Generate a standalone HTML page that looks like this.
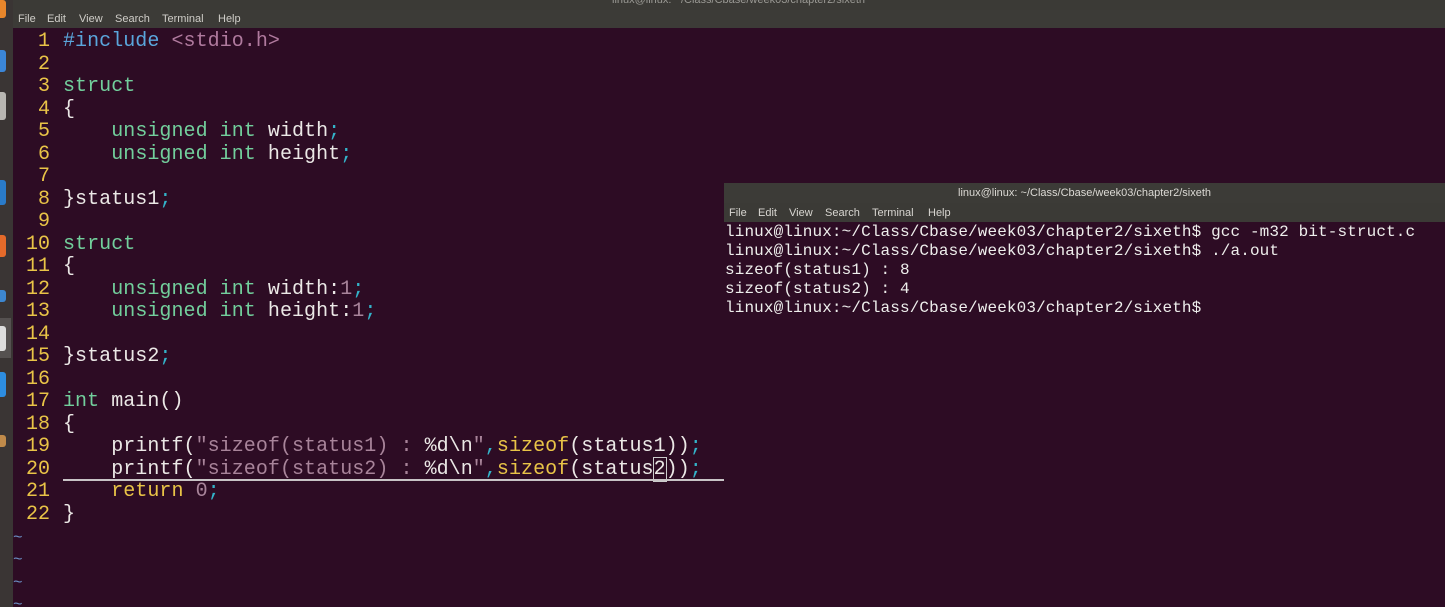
<!DOCTYPE html>
<html><head><meta charset="utf-8"><style>
html,body{margin:0;padding:0;width:1445px;height:607px;overflow:hidden;background:#2d0c24;}
body{position:relative;font-family:"Liberation Mono",monospace;}
#top{position:absolute;left:0;top:0;width:1445px;height:10px;background:#3b3a36;}
#top span{position:absolute;left:612px;top:-6px;font:11px "Liberation Sans",sans-serif;color:#9a9994;}
#menu{position:absolute;left:13px;top:10px;width:1432px;height:18px;background:#3c3b37;font:11px "Liberation Sans",sans-serif;color:#cfcdc8;}
#menu span{position:absolute;top:3px;}
#dock{position:absolute;left:0;top:0;width:13px;height:607px;background:#3a3534;}
.ic{position:absolute;left:0;width:6px;border-radius:0 3px 3px 0;}
#code{position:absolute;left:13px;top:31px;}
.l{position:absolute;left:0;height:22px;white-space:pre;font-size:20px;letter-spacing:0.05px;line-height:22px;color:#ebe8e6;}
.n{display:inline-block;width:37px;text-align:right;color:#e9c447;margin-right:13px;letter-spacing:0;}
.b{color:#5aa6dc}.p{color:#b07a9e}.g{color:#72cf9c}.y{color:#e9c447}.c{color:#33b3c9}.s{color:#a8849a}
.t{position:absolute;left:15px;color:#6b8fc4;font-size:16px;}
#term{position:absolute;left:724px;top:183px;width:721px;height:424px;background:#2d0c24;}
#tt{height:20px;background:#3c3b37;color:#dcdad5;font:11px "Liberation Sans",sans-serif;text-align:center;line-height:20px;}
#tm{height:19px;background:#3b3a36;color:#d8d6d1;font:11px "Liberation Sans",sans-serif;position:relative;}
#tm span{position:absolute;top:4px;}
#tx{font-size:16px;line-height:19px;color:#eeeeec;white-space:pre;padding-left:1px;padding-top:1px;letter-spacing:0.12px;}
</style></head><body>
<div id="top"><span>linux@linux: ~/Class/Cbase/week03/chapter2/sixeth</span></div>
<div id="dock">
<div class="ic" style="top:0;height:18px;background:#e8862b"></div>
<div class="ic" style="top:50px;height:22px;background:#3b86d8"></div>
<div class="ic" style="top:92px;height:28px;background:#b8b6b2"></div>
<div class="ic" style="top:180px;height:25px;background:#2a7bc9"></div>
<div class="ic" style="top:235px;height:22px;background:#e46a2a"></div>
<div class="ic" style="top:290px;height:12px;background:#3d87d0"></div>
<div style="position:absolute;left:0;top:318px;width:11px;height:40px;background:#555150"></div>
<div class="ic" style="top:326px;height:25px;background:#ddd"></div>
<div class="ic" style="top:372px;height:25px;background:#2d8de0"></div>
<div class="ic" style="top:435px;height:12px;background:#c08a4a"></div>
</div>
<div id="menu"><span style="left:5px">File</span><span style="left:34px">Edit</span><span style="left:66px">View</span><span style="left:102px">Search</span><span style="left:149px">Terminal</span><span style="left:205px">Help</span></div>
<div id="code">
<div class="l" style="top:0px"><span class="n">1</span><span class="b">#include</span> <span class="p">&lt;stdio.h&gt;</span></div>
<div class="l" style="top:22.5px"><span class="n">2</span></div>
<div class="l" style="top:45px"><span class="n">3</span><span class="g">struct</span></div>
<div class="l" style="top:67.5px"><span class="n">4</span>{</div>
<div class="l" style="top:90px"><span class="n">5</span>    <span class="g">unsigned int</span> width<span class="c">;</span></div>
<div class="l" style="top:112.5px"><span class="n">6</span>    <span class="g">unsigned int</span> height<span class="c">;</span></div>
<div class="l" style="top:135px"><span class="n">7</span></div>
<div class="l" style="top:157.5px"><span class="n">8</span>}status1<span class="c">;</span></div>
<div class="l" style="top:180px"><span class="n">9</span></div>
<div class="l" style="top:202.5px"><span class="n">10</span><span class="g">struct</span></div>
<div class="l" style="top:225px"><span class="n">11</span>{</div>
<div class="l" style="top:247.5px"><span class="n">12</span>    <span class="g">unsigned int</span> width:<span class="s">1</span><span class="c">;</span></div>
<div class="l" style="top:270px"><span class="n">13</span>    <span class="g">unsigned int</span> height:<span class="s">1</span><span class="c">;</span></div>
<div class="l" style="top:292.5px"><span class="n">14</span></div>
<div class="l" style="top:315px"><span class="n">15</span>}status2<span class="c">;</span></div>
<div class="l" style="top:337.5px"><span class="n">16</span></div>
<div class="l" style="top:360px"><span class="n">17</span><span class="g">int</span> main()</div>
<div class="l" style="top:382.5px"><span class="n">18</span>{</div>
<div class="l" style="top:405px"><span class="n">19</span>    printf(<span class="s">"sizeof(status1) : </span><span>%d\n</span><span class="s">"</span><span class="c">,</span><span class="y">sizeof</span>(status1))<span class="c">;</span></div>
<div class="l" style="top:427.5px"><span class="n">20</span>    printf(<span class="s">"sizeof(status2) : </span><span>%d\n</span><span class="s">"</span><span class="c">,</span><span class="y">sizeof</span>(status<span style="outline:1px solid #ccc">2</span>))<span class="c">;</span></div>
<div style="position:absolute;left:50px;top:448px;width:661px;height:2px;background:#c8c4c6"></div>
<div class="l" style="top:450px"><span class="n">21</span>    <span class="y">return</span> <span class="s">0</span><span class="c">;</span></div>
<div class="l" style="top:472.5px"><span class="n">22</span>}</div>
<div class="t" style="top:498px;left:0">~</div>
<div class="t" style="top:520px;left:0">~</div>
<div class="t" style="top:543px;left:0">~</div>
<div class="t" style="top:565px;left:0">~</div>
</div>
<div id="term">
<div id="tt">linux@linux: ~/Class/Cbase/week03/chapter2/sixeth</div>
<div id="tm"><span style="left:5px">File</span><span style="left:34px">Edit</span><span style="left:65px">View</span><span style="left:101px">Search</span><span style="left:148px">Terminal</span><span style="left:204px">Help</span></div>
<div id="tx">linux@linux:~/Class/Cbase/week03/chapter2/sixeth$ gcc -m32 bit-struct.c
linux@linux:~/Class/Cbase/week03/chapter2/sixeth$ ./a.out
sizeof(status1) : 8
sizeof(status2) : 4
linux@linux:~/Class/Cbase/week03/chapter2/sixeth$</div>
</div>
</body></html>
